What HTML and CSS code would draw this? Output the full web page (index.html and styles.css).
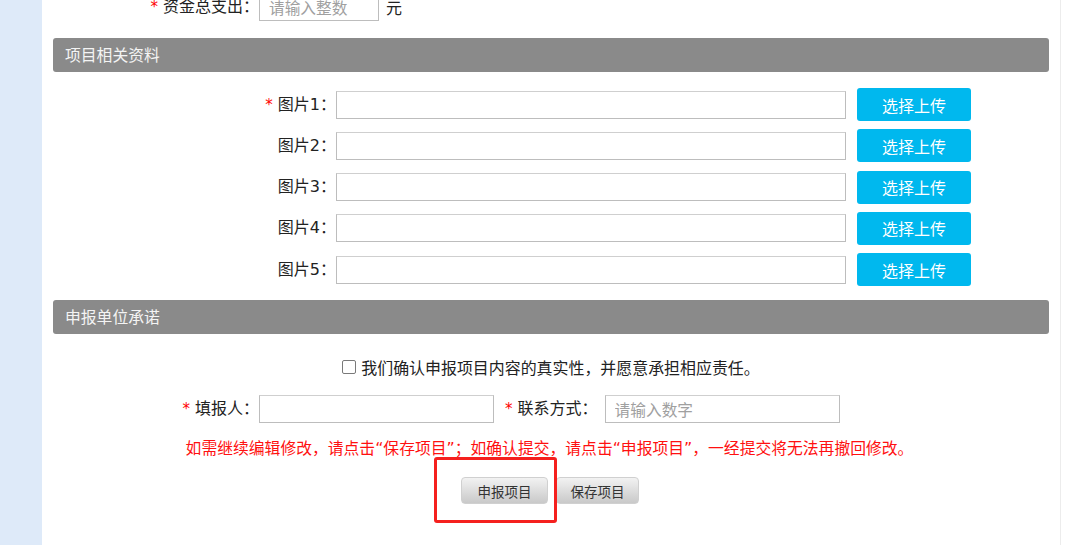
FILE: index.html
```html
<!DOCTYPE html>
<html lang="zh">
<head>
<meta charset="utf-8">
<title>项目申报</title>
<link rel="stylesheet" href="styles.css">
</head>
<body>
<div class="page">
  <aside class="side"></aside>
  <main class="main">
    <div class="row-top">
      <label class="lbl lbl-top"><span class="req">*</span> 资金总支出：</label>
      <input class="txt txt-s" type="text" placeholder="请输入整数">
      <span class="unit">元</span>
    </div>

    <div class="sec">项目相关资料</div>

    <div class="pics">
      <div class="pic-row"><label class="lbl lbl-pic"><span class="req">*</span> 图片1：</label><input class="txt txt-l" type="text"><button class="up">选择上传</button></div>
      <div class="pic-row"><label class="lbl lbl-pic">图片2：</label><input class="txt txt-l" type="text"><button class="up">选择上传</button></div>
      <div class="pic-row"><label class="lbl lbl-pic">图片3：</label><input class="txt txt-l" type="text"><button class="up">选择上传</button></div>
      <div class="pic-row"><label class="lbl lbl-pic">图片4：</label><input class="txt txt-l" type="text"><button class="up">选择上传</button></div>
      <div class="pic-row"><label class="lbl lbl-pic">图片5：</label><input class="txt txt-l" type="text"><button class="up">选择上传</button></div>
    </div>

    <div class="sec sec-2">申报单位承诺</div>

    <label class="agree"><input class="cb" type="checkbox">我们确认申报项目内容的真实性，并愿意承担相应责任。</label>

    <div class="person">
      <label class="lbl lbl-name"><span class="req">*</span> 填报人：</label>
      <input class="txt txt-m" type="text">
      <label class="lbl lbl-tel"><span class="req">*</span> 联系方式：</label>
      <input class="txt txt-m" type="text" placeholder="请输入数字">
    </div>

    <p class="warn">如需继续编辑修改，请点击“保存项目”；如确认提交，请点击“申报项目”，一经提交将无法再撤回修改。</p>

    <div class="actions">
      <button class="btn btn-submit">申报项目</button>
      <button class="btn btn-save">保存项目</button>
    </div>
  </main>
</div>
<div class="mark"></div>
</body>
</html>
```

FILE: styles.css
```css
html, body {
  margin: 0;
  padding: 0;
  background: #ffffff;
  overflow: hidden;
}

body {
  font-family: "DejaVu Sans", "Noto Sans CJK SC", sans-serif;
  font-size: 16px;
  color: #222;
}

.page {
  display: flex;
  width: 1080px;
  height: 545px;
}

.side {
  width: 42px;
  flex: none;
  background: #deeaf9;
}

.main {
  width: 1007px;
  flex: none;
  padding: 0 0 0 11px;
  border-right: 1px solid #ececec;
  margin-right: 19px;
}

.main > * { width: 996px; }

.lbl {
  display: inline-block;
  text-align: right;
  white-space: nowrap;
  line-height: 20px;
  font-family: "DejaVu Sans", "Noto Sans CJK SC", sans-serif;
  font-size: 16px;
}

.req {
  color: #ff0000;
  font-family: "DejaVu Sans", sans-serif;
  font-size: 15px;
}

.txt {
  box-sizing: border-box;
  height: 28px;
  border: 1px solid #bdbdbd;
  border-top-color: #cfcfcf;
  background: #fff;
  padding: 0 9px;
  font-family: "Noto Sans CJK SC", sans-serif;
  font-size: 15.7px;
  color: #333;
  outline: none;
  margin: 0;
}

.txt::placeholder { color: #a0a0a0; }

/* top row */
.row-top {
  display: flex;
  align-items: center;
  height: 28px;
  margin-top: -7px;
}

.lbl-top { width: 206px; }
.txt-s { width: 120px; }
.unit {
  margin-left: 7px;
  font-family: "Noto Sans CJK SC", sans-serif;
}

/* section headers */
.sec {
  box-sizing: border-box;
  height: 34px;
  margin-top: 17px;
  padding-left: 12px;
  background: #8a8a8a;
  border-radius: 3px;
  color: #f4f4f4;
  line-height: 34px;
  font-family: "Noto Sans CJK SC", sans-serif;
  font-size: 15.8px;
}

.sec-2 { margin-top: 14px; }

/* picture rows */
.pics {
  display: flex;
  flex-direction: column;
  gap: 8.3px;
  margin-top: 16px;
}

.pic-row {
  display: flex;
  align-items: center;
  height: 33px;
}

.lbl-pic { width: 283px; }
.txt-l { width: 510px; }

.up {
  width: 114px;
  height: 33px;
  margin-left: 11px;
  border: none;
  border-radius: 3px;
  background: #00b8ee;
  color: #fff;
  font-family: "Noto Sans CJK SC", sans-serif;
  font-size: 16px;
  padding: 0;
}

/* agreement */
.agree {
  display: flex;
  justify-content: center;
  align-items: center;
  height: 20px;
  margin-top: 23px;
  font-family: "Noto Sans CJK SC", sans-serif;
  font-size: 15.95px;
  color: #222;
}

.cb {
  appearance: none;
  -webkit-appearance: none;
  box-sizing: border-box;
  width: 14px;
  height: 14px;
  margin: 0 5px 0 0;
  border: 1px solid #7a7a7a;
  border-radius: 2px;
  background: #fff;
}

/* person row */
.person {
  display: flex;
  align-items: center;
  height: 28px;
  margin-top: 18px;
}

.lbl-name { width: 206px; }
.txt-m { width: 235px; }
.lbl-tel { margin-left: 11px; margin-right: 7px; }

/* warning */
.warn {
  margin: 16px 0 0;
  height: 20px;
  line-height: 20px;
  text-align: center;
  color: #ff1010;
  font-size: 15.8px;
  font-family: "DejaVu Sans", "Noto Sans CJK SC", sans-serif;
  padding-left: 1px;
  padding-right: 4px;
  box-sizing: border-box;
}

/* actions */
.actions {
  display: flex;
  justify-content: center;
  gap: 8px;
  margin-top: 18px;
  padding-right: 2px;
  box-sizing: border-box;
}

.btn {
  height: 27px;
  border: 1px solid #d0d0d0;
  border-radius: 4px;
  background: linear-gradient(#f2f2f2, #c9c9c9);
  color: #333;
  font-family: "Noto Sans CJK SC", sans-serif;
  font-size: 13.5px;
  padding: 0;
}

.btn-submit { width: 87px; }
.btn-save { width: 83px; }

/* red annotation box laid over the screenshot */
.mark {
  position: absolute;
  left: 434px;
  top: 457px;
  width: 123px;
  height: 66px;
  box-sizing: border-box;
  border: 3px solid #f5201e;
  border-radius: 3px;
}
```
